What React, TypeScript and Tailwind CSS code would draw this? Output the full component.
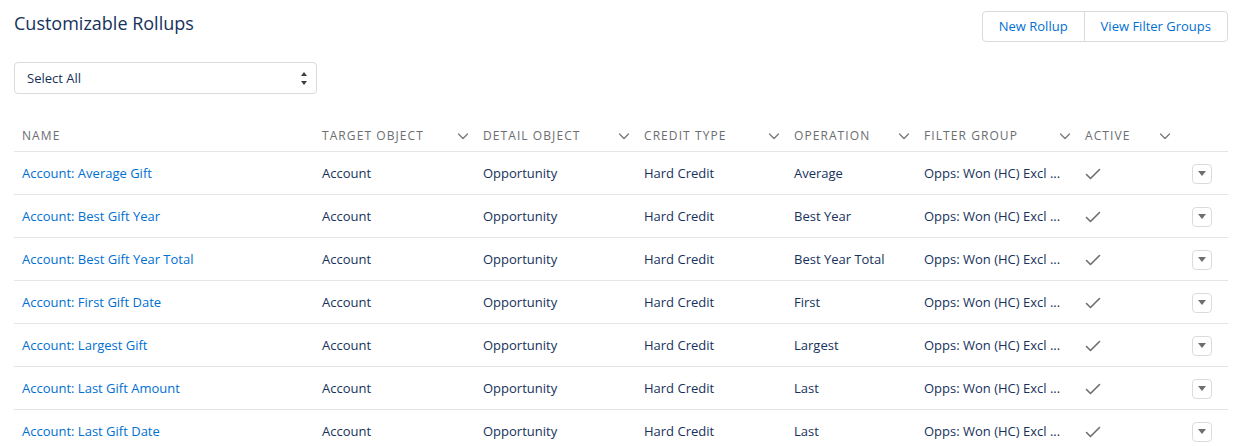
import React from 'react';

type Rollup = {
  name: string;
  operation: string;
};

const rollups: Rollup[] = [
  { name: 'Account: Average Gift', operation: 'Average' },
  { name: 'Account: Best Gift Year', operation: 'Best Year' },
  { name: 'Account: Best Gift Year Total', operation: 'Best Year Total' },
  { name: 'Account: First Gift Date', operation: 'First' },
  { name: 'Account: Largest Gift', operation: 'Largest' },
  { name: 'Account: Last Gift Amount', operation: 'Last' },
  { name: 'Account: Last Gift Date', operation: 'Last' },
];

const cols = 'grid grid-cols-[300px_161px_161px_150px_130px_161px_100px_1fr]';

const Chevron = () => (
  <svg width="12" height="12" viewBox="0 0 12 12" fill="none" className="shrink-0">
    <path d="M1.5 4l4.5 4.5L10.5 4" stroke="#7a7876" strokeWidth="1.3" strokeLinecap="round" strokeLinejoin="round" />
  </svg>
);

const Check = () => (
  <svg width="16" height="12" viewBox="0 0 16 12" fill="none">
    <path d="M1.5 6.5l4 4L14.5 1.5" stroke="#706e6b" strokeWidth="1.6" strokeLinecap="round" strokeLinejoin="round" />
  </svg>
);

const HeaderCell: React.FC<{ label: string; sortable?: boolean }> = ({ label, sortable = true }) => (
  <div className="flex items-center justify-between pt-[1px] pl-2 pr-[6px]">
    <span className="text-[12px] tracking-[0.09em] text-[#6b6d70] uppercase">{label}</span>
    {sortable && <Chevron />}
  </div>
);

export default function App() {
  return (
    <div className="min-h-screen bg-white pt-[11px] pr-[13px] pl-[14px] font-['Open_Sans',sans-serif] text-[13px] text-[#16325c]">
      <div className="flex items-start justify-between">
        <h1 className="text-[18px] leading-[24px] text-[#16325c]">Customizable Rollups</h1>
        <div className="flex h-[31px] rounded border border-[#dddbda] bg-white text-[13px] text-[#0070d2]">
          <button className="px-4 pt-[1px]">New Rollup</button>
          <button className="border-l border-[#dddbda] px-4 pt-[1px]">View Filter Groups</button>
        </div>
      </div>

      <div className="mt-[20px] flex h-[32px] w-[303px] items-center justify-between rounded border border-[#dddbda] pt-[1px] pr-[9px] pl-[12px]">
        <span>Select All</span>
        <div className="flex flex-col items-center gap-[5px]">
          <svg width="6" height="4" viewBox="0 0 6 4"><path d="M3 0L6 4H0z" fill="#3e3e3c" /></svg>
          <svg width="6" height="4" viewBox="0 0 6 4"><path d="M0 0h6L3 4z" fill="#3e3e3c" /></svg>
        </div>
      </div>

      <div className="mt-[25px]">
        <div className={`${cols} h-[33px] border-b border-[#e5e5e5]`}>
          <HeaderCell label="Name" sortable={false} />
          <HeaderCell label="Target Object" />
          <HeaderCell label="Detail Object" />
          <HeaderCell label="Credit Type" />
          <HeaderCell label="Operation" />
          <HeaderCell label="Filter Group" />
          <HeaderCell label="Active" />
          <div />
        </div>
        {rollups.map((r) => (
          <div key={r.name} className={`${cols} h-[43px] items-center border-b border-[#e5e5e5] pt-[1px]`}>
            <a className="pl-2 text-[#0070d2]">{r.name}</a>
            <div className="pl-2">Account</div>
            <div className="pl-2">Opportunity</div>
            <div className="pl-2">Hard Credit</div>
            <div className="pl-2">{r.operation}</div>
            <div className="pl-2">Opps: Won (HC) Excl ...</div>
            <div className="pl-2">
              <Check />
            </div>
            <div className="flex justify-end pr-4">
              <button className="flex h-[20px] w-[20px] items-center justify-center rounded border border-[#dddbda]">
                <svg width="8" height="5" viewBox="0 0 8 5"><path d="M0 0h8L4 5z" fill="#706e6b" /></svg>
              </button>
            </div>
          </div>
        ))}
      </div>
    </div>
  );
}
